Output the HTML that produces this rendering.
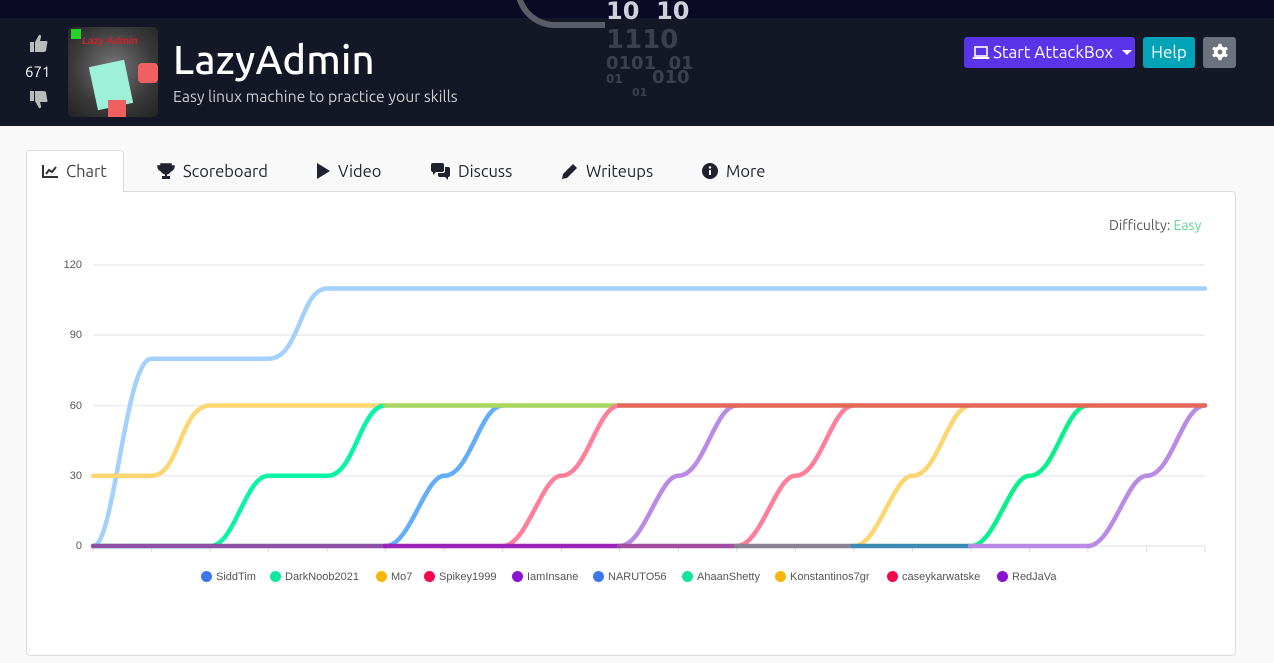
<!DOCTYPE html>
<html><head><meta charset="utf-8"><style>
*{margin:0;padding:0;box-sizing:border-box}
body{width:1274px;height:663px;overflow:hidden;background:#f9f9f9;font-family:"Ubuntu","DejaVu Sans","Liberation Sans",sans-serif;position:relative}
.top{position:absolute;left:0;top:0;width:1274px;height:18px;background:#0b0a26}
.hdr{position:absolute;left:0;top:18px;width:1274px;height:108px;background:#141726}
.abs{position:absolute}
.btn{position:absolute;top:37px;height:31px;border-radius:3px;color:#fff;font-size:17px;line-height:31px}
.tab{position:absolute;top:152px;height:41px;line-height:41px;font-size:16.5px;color:#1f2330}
.card{position:absolute;left:26px;top:191px;width:1210px;height:465px;background:#fff;border:1px solid #ddd;border-radius:0 4px 4px 4px}
.lg{position:absolute;top:571px;font-family:"Liberation Sans",sans-serif;font-size:11px;color:#555}
.lg i{display:inline-block;width:11px;height:11px;border-radius:50%;vertical-align:-2px;margin-right:4px}
</style></head><body>
<div class="top"></div>
<div class="hdr"></div>
<div class="abs" style="left:515px;top:-30px;width:90px;height:58px;border:6px solid #5a5c66;border-top:none;border-right:none;border-radius:0 0 0 40px"></div>
<div class="abs" style="left:606px;top:-3px;color:#d0d0d8;font:bold 24px 'DejaVu Sans',sans-serif">10&nbsp;&nbsp;10</div>
<div class="abs" style="left:606px;top:25px;color:#3d404c;font:bold 26px 'DejaVu Sans',sans-serif">1110</div>
<div class="abs" style="left:606px;top:53px;color:#3d404c;font:bold 18px 'DejaVu Sans',sans-serif">0101&nbsp;&nbsp;01</div>
<div class="abs" style="left:606px;top:72px;color:#3d404c;font:bold 12px 'DejaVu Sans',sans-serif">01</div>
<div class="abs" style="left:652px;top:67px;color:#3d404c;font:bold 18px 'DejaVu Sans',sans-serif">010</div>
<div class="abs" style="left:632px;top:86px;color:#3d404c;font:bold 11px 'DejaVu Sans',sans-serif">01</div>
<svg class="abs" style="left:29px;top:33px" width="20" height="20" viewBox="0 0 20 20"><rect x="1" y="9" width="4" height="10" fill="#bbb"/><path d="M6 9 L10 2 Q12 1 12 4 L11 8 L18 8 Q19 9 18 11 L17 18 Q16 19 14 19 L6 19Z" fill="#bbb"/></svg>
<div class="abs" style="left:25px;top:63px;color:#fff;font-size:15px">671</div>
<svg class="abs" style="left:29px;top:90px" width="20" height="20" viewBox="0 0 20 20"><g transform="translate(0,20) scale(1,-1)"><rect x="1" y="9" width="4" height="10" fill="#bbb"/><path d="M6 9 L10 2 Q12 1 12 4 L11 8 L18 8 Q19 9 18 11 L17 18 Q16 19 14 19 L6 19Z" fill="#bbb"/></g></svg>
<div class="abs" style="left:68px;top:27px;width:90px;height:90px;border-radius:5px;background:radial-gradient(circle at 50% 45%,#777 0%,#3a3a3a 60%,#222 100%);overflow:hidden">
 <div class="abs" style="left:3px;top:2px;width:10px;height:10px;background:#2ad02a"></div>
 <div class="abs" style="left:14px;top:9px;color:#d02030;font:italic bold 10px 'Liberation Sans',sans-serif">Lazy Admin</div>
 <div class="abs" style="left:25px;top:36px;width:36px;height:44px;background:#9ff0d8;transform:rotate(-12deg)"></div>
 <div class="abs" style="left:70px;top:36px;width:20px;height:20px;background:#f06060;border-radius:4px"></div>
 <div class="abs" style="left:40px;top:73px;width:18px;height:17px;background:#f06060"></div>
</div>
<div class="abs" style="left:173px;top:37px;color:#fff;font-size:40px;line-height:46px;font-weight:500;letter-spacing:0.2px">LazyAdmin</div>
<div class="abs" style="left:173px;top:87px;color:#ccc;font-size:15.8px">Easy linux machine to practice your skills</div>
<div class="btn" style="left:964px;width:171px;background:#5a34e8;padding-left:8px">
 <svg style="vertical-align:-3px;margin-right:3px" width="18" height="16" viewBox="0 0 18 16"><rect x="3" y="2" width="12" height="9" fill="none" stroke="#fff" stroke-width="1.6"/><rect x="0.5" y="12" width="17" height="2" rx="1" fill="#fff"/></svg>Start AttackBox <span style="display:inline-block;margin-left:5px;border-left:5px solid transparent;border-right:5px solid transparent;border-top:5px solid #fff;vertical-align:3px"></span></div>
<div class="btn" style="left:1143px;width:52px;background:#00a3b8;text-align:center">Help</div>
<div class="btn" style="left:1203px;width:33px;background:#6c727e;text-align:center;font-size:18px">
<svg style="vertical-align:-3px" width="18" height="18" viewBox="0 0 18 18"><g fill="#fff"><circle cx="9" cy="9" r="6"/><rect x="7.3" y="0.8" width="3.4" height="16.4" rx="1"/><rect x="7.3" y="0.8" width="3.4" height="16.4" rx="1" transform="rotate(60 9 9)"/><rect x="7.3" y="0.8" width="3.4" height="16.4" rx="1" transform="rotate(120 9 9)"/></g><circle cx="9" cy="9" r="2.4" fill="#6c727e"/></svg></div>
<div class="abs" style="left:26px;top:150px;width:98px;height:42px;background:#fff;border:1px solid #ddd;border-bottom:none;border-radius:4px 4px 0 0;z-index:2"></div>
<div class="card"></div>
<div class="tab" style="left:42px;z-index:3;color:#444"><svg width="17" height="14" viewBox="0 0 17 14" style="vertical-align:-1px;margin-right:7px"><path d="M1 1V13H16" fill="none" stroke="#333" stroke-width="2"/><path d="M4 10L7 6 10 8 14 3" fill="none" stroke="#333" stroke-width="2"/></svg>Chart</div>
<div class="tab" style="left:157px"><svg width="18" height="16" viewBox="0 0 18 16" style="vertical-align:-2px;margin-right:8px"><path d="M4 1H14V6Q14 10 9 11Q4 10 4 6Z M4 3H1Q1 7 5 8 M14 3H17Q17 7 13 8" fill="#1f2330" stroke="#1f2330" stroke-width="1.5"/><rect x="8" y="10" width="2" height="3" fill="#1f2330"/><rect x="5" y="13" width="8" height="3" fill="#1f2330"/></svg>Scoreboard</div>
<div class="tab" style="left:317px"><svg width="13" height="16" viewBox="0 0 13 16" style="vertical-align:-2px;margin-right:8px"><path d="M0 0L13 8 0 16Z" fill="#1f2330"/></svg>Video</div>
<div class="tab" style="left:431px"><svg width="20" height="17" viewBox="0 0 20 17" style="vertical-align:-3px;margin-right:7px"><path d="M0 2Q0 0 2 0H11Q13 0 13 2V7Q13 9 11 9H5L2 12V9Q0 9 0 7Z" fill="#1f2330"/><path d="M14 4H17Q19 4 19 6V12Q19 14 17 14V17L14 14H9Q7 14 7 12V10H12Q14 10 14 8Z" fill="#1f2330"/></svg>Discuss</div>
<div class="tab" style="left:561px"><svg width="17" height="17" viewBox="0 0 17 17" style="vertical-align:-3px;margin-right:8px"><path d="M12 1L16 5 6 15 1 16 2 11Z" fill="#1f2330"/></svg>Writeups</div>
<div class="tab" style="left:702px"><svg width="16" height="16" viewBox="0 0 16 16" style="vertical-align:-2px;margin-right:8px"><circle cx="8" cy="8" r="8" fill="#1f2330"/><rect x="7" y="7" width="2" height="5" fill="#fff"/><circle cx="8" cy="4.5" r="1.2" fill="#fff"/></svg>More</div>
<div class="abs" style="left:1109px;top:217px;font-size:14px;color:#555">Difficulty: <span style="color:#5dd88f">Easy</span></div>
<svg class="abs" style="left:0;top:0" width="1274" height="663" viewBox="0 0 1274 663" font-family="Liberation Sans, sans-serif" font-size="11" fill="#555">
<g stroke="#ebebeb" stroke-width="1.5">
<line x1="93" y1="265" x2="1205" y2="265"/><line x1="93" y1="335.3" x2="1205" y2="335.3"/><line x1="93" y1="405.5" x2="1205" y2="405.5"/><line x1="93" y1="475.8" x2="1205" y2="475.8"/><line x1="93" y1="546" x2="1205" y2="546"/>
</g>
<g stroke="#ddd" stroke-width="1">
<path d="M93 546v6M151.5 546v6M210.1 546v6M268.6 546v6M327.1 546v6M385.6 546v6M444.2 546v6M502.7 546v6M561.2 546v6M619.7 546v6M678.3 546v6M736.8 546v6M795.3 546v6M853.8 546v6M912.4 546v6M970.9 546v6M1029.4 546v6M1087.9 546v6M1146.5 546v6M1205 546v6"/>
</g>
<g text-anchor="end"><text x="82" y="268">120</text><text x="82" y="338">90</text><text x="82" y="409">60</text><text x="82" y="479">30</text><text x="82" y="549">0</text></g>
<g fill="none" stroke-width="4.5" stroke-linecap="round">
<path d="M93 546C115 546 125 358.7 151.5 358.7L268.6 358.7C300 358.7 300 288.5 327.1 288.5L1205 288.5" stroke="#a3d1fb"/>
<path d="M93 475.8L151.5 475.8C180 475.8 180 405.5 210.1 405.5L385 405.5" stroke="#fdd671"/>
<path d="M93 546L210.1 546C235 546 245 475.8 268.6 475.8L327.1 475.8C355 475.8 360 405.5 385.6 405.5" stroke="#0af4a6"/>
<path d="M385.6 546C410 546 425 475.8 444.2 475.8C470 475.8 480 405.5 502.7 405.5" stroke="#63aef8"/>
<path d="M385 405.5L619 405.5" stroke="#a8d65e"/>
<path d="M502.7 546C527 546 542 475.8 561.2 475.8C587 475.8 597 405.5 619.7 405.5" stroke="#ff7f98"/>
<path d="M619.7 546C644 546 659 475.8 678.3 475.8C704 475.8 714 405.5 736.8 405.5" stroke="#b98be4"/>
<path d="M736.8 546C761 546 776 475.8 795.3 475.8C821 475.8 831 405.5 853.8 405.5" stroke="#ff7f98"/>
<path d="M853.8 546C878 546 893 475.8 912.4 475.8C938 475.8 948 405.5 970.9 405.5" stroke="#fdd671"/>
<path d="M970.9 546C995 546 1010 475.8 1029.4 475.8C1055 475.8 1065 405.5 1087.9 405.5" stroke="#0af08c"/>
<path d="M1087.9 546C1112 546 1127 475.8 1146.5 475.8C1172 475.8 1182 405.5 1205 405.5" stroke="#b98be4"/>
<path d="M619 405.5L1205 405.5" stroke="#e3685a"/>
<path d="M93 546L385 546" stroke="#8d52a6"/>
<path d="M385 546L619 546" stroke="#9b24b6"/>
<path d="M619 546L736 546" stroke="#a14ea2"/>
<path d="M736 546L853 546" stroke="#8a8294"/>
<path d="M853 546L970 546" stroke="#3d8ab4"/>
<path d="M970 546L1088 546" stroke="#b98be4"/>
</g>
</svg>
<div class="lg" style="left:201px"><i style="background:#3b76ef"></i>SiddTim</div>
<div class="lg" style="left:270px"><i style="background:#0fe7a0"></i>DarkNoob2021</div>
<div class="lg" style="left:376px"><i style="background:#f8b60a"></i>Mo7</div>
<div class="lg" style="left:424px"><i style="background:#f5074f"></i>Spikey1999</div>
<div class="lg" style="left:512px"><i style="background:#8a12d2"></i>IamInsane</div>
<div class="lg" style="left:593px"><i style="background:#3b76ef"></i>NARUTO56</div>
<div class="lg" style="left:682px"><i style="background:#0fe7a0"></i>AhaanShetty</div>
<div class="lg" style="left:775px"><i style="background:#f8b60a"></i>Konstantinos7gr</div>
<div class="lg" style="left:887px"><i style="background:#f5074f"></i>caseykarwatske</div>
<div class="lg" style="left:997px"><i style="background:#8a12d2"></i>RedJaVa</div>
</body></html>
